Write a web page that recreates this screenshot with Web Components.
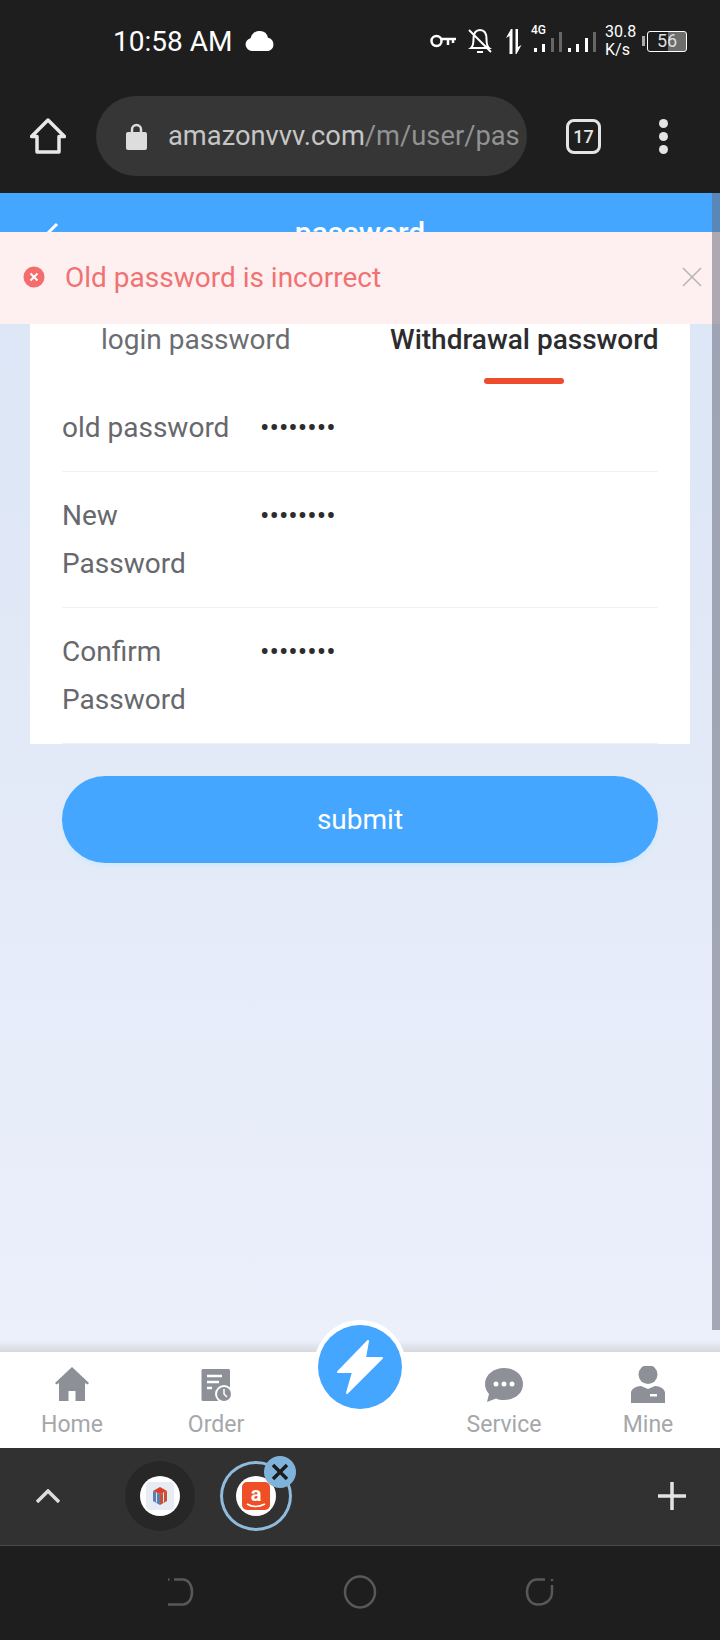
<!DOCTYPE html>
<html>
<head>
<meta charset="utf-8">
<title>password</title>
<style>
  html, body { margin: 0; padding: 0; background: #1e1e1e; }
  body { width: 720px; height: 1640px; display: flex; flex-direction: column; overflow: hidden; font-family: Roboto, sans-serif; }
</style>
</head>
<body>
<status-bar></status-bar>
<browser-bar url="amazonvvv.com" path="/m/user/pas" tabs="17"></browser-bar>
<app-page>
  <password-form slot="form"></password-form>
  <alert-box slot="alert">Old password is incorrect</alert-box>
</app-page>
<tab-nav></tab-nav>
<bubble-bar></bubble-bar>
<system-nav></system-nav>

<script>
class StatusBar extends HTMLElement {
  constructor() {
    super();
    this.attachShadow({ mode: 'open' });
    this.shadowRoot.innerHTML = `
      <style>
        :host { display: flex; align-items: center; justify-content: space-between; height: 82px; padding: 0 33px 0 113px; box-sizing: border-box; color: #fff; background: #1e1e1e; flex: none; }
        .left { display: flex; align-items: center; gap: 13px; font-size: 28px; }
        .right { display: flex; align-items: center; }
        .speed { font-size: 16px; line-height: 18px; width: 33px; margin-left: 8px; white-space: nowrap; }
        .sig { position: relative; width: 32px; height: 28px; margin-left: 8px; }
        .g4 { font-size: 12px; line-height: 12px; position: absolute; top: -3px; left: 0; font-weight: 500; }
        .bat { position: relative; width: 40px; height: 21px; border: 1.500px solid #fff; border-radius: 3px; margin-left: 9px; box-sizing: border-box; font-size: 18px; line-height: 18px; text-align: center; color: #ddd; background: linear-gradient(90deg, transparent 52%, #6d6d6d 52%); }
        .bat::before { content: ''; position: absolute; left: -6px; top: 4px; width: 3px; height: 10px; background: #aaa; }
      </style>
      <div class="left">
        <span>10:58 AM</span>
        <svg width="30" height="20" viewBox="0 0 30 20"><path fill="#fff" d="M7 20a6.500 6.500 0 0 1-1.500-12.800A9 9 0 0 1 15 0a8.500 8.500 0 0 1 8 6.800A6.800 6.800 0 0 1 23.500 20z"/></svg>
      </div>
      <div class="right">
        <svg width="26" height="14" viewBox="0 0 26 14" fill="none" stroke="#fff" stroke-width="2.500"><circle cx="6.500" cy="7" r="5"/><path d="M11 5h15M18 5v6M23 5v4"/></svg>
        <svg style="margin-left:12px" width="24" height="26" viewBox="0 0 24 26" fill="none" stroke="#fff" stroke-width="2"><path d="M3 20c2-1.500 2.500-4 2.500-9C5.500 5 8 2 12 2s6.500 3 6.500 9c0 5 .5 7.500 2.500 9zM9 24h6M1 2l22 22"/></svg>
        <svg style="margin-left:13px" width="18" height="25" viewBox="0 0 18 25" fill="#fff"><path d="M4.500 25V7L1 9 6 0h1.500v25zM10.500 0H13v18l3.500-2-5 9h-1z"/></svg>
        <span class="sig"><span class="g4">4G</span>
          <svg width="32" height="28" viewBox="0 0 32 28" style="position:absolute;left:0;top:0"><rect x="3" y="21" width="3" height="4" fill="#fff"/><rect x="11" y="17" width="3" height="8" fill="#fff"/><rect x="20" y="11" width="3" height="14" fill="#666"/><rect x="28" y="5" width="3" height="20" fill="#666"/></svg>
        </span>
        <svg style="margin-left:5px" width="29" height="28" viewBox="0 0 29 28"><rect x="0" y="21" width="3" height="4" fill="#fff"/><rect x="8" y="17" width="3" height="8" fill="#fff"/><rect x="17" y="11" width="3" height="14" fill="#fff"/><rect x="25" y="5" width="3" height="20" fill="#666"/></svg>
        <div class="speed">30.8<br>K/s</div>
        <div class="bat">56</div>
      </div>
    `;
  }
}
customElements.define('status-bar', StatusBar);

class BrowserBar extends HTMLElement {
  constructor() {
    super();
    this.attachShadow({ mode: 'open' });
    const url = this.getAttribute('url');
    const path = this.getAttribute('path');
    const tabs = this.getAttribute('tabs');
    this.shadowRoot.innerHTML = `
      <style>
        :host { display: flex; align-items: center; height: 111px; padding: 0 0 3px 30px; box-sizing: border-box; background: #1e1e1e; flex: none; }
        .pill { width: 431px; height: 80px; margin-left: 30px; border-radius: 40px; background: #363636; display: flex; align-items: center; padding: 0 14px 0 30px; box-sizing: border-box; flex: none; }
        .url { margin-left: 21px; font-size: 27.300px; color: #c6c6c6; white-space: nowrap; flex: 1; }
        .url span { color: #929292; }
        .tabs { margin-left: 39px; width: 35px; height: 35px; box-sizing: border-box; border: 3.500px solid #e4e4e4; border-radius: 8px; color: #e4e4e4; font-size: 18px; font-weight: 500; display: flex; align-items: center; justify-content: center; flex: none; }
        .dots { margin-left: 58px; display: flex; flex-direction: column; gap: 4px; }
        .dots i { width: 9px; height: 9px; border-radius: 50%; background: #e4e4e4; display: block; }
      </style>
      <svg width="36" height="36" viewBox="0 0 36 36" fill="none" stroke="#e8e8e8" stroke-width="3.500" stroke-linejoin="round" style="flex:none"><path d="M1.500 18.500 18 2l16.500 16.500H29V34H7V18.500z"/></svg>
      <div class="pill">
        <svg width="21" height="27" viewBox="0 0 21 27" style="flex:none"><path fill="none" stroke="#ddd" stroke-width="2.500" d="M6 10V6.500a4.500 4.500 0 0 1 9 0V10"/><rect y="9" width="21" height="18" rx="2" fill="#ddd"/></svg>
        <div class="url">${url}<span>${path}</span></div>
      </div>
      <div class="tabs">${tabs}</div>
      <div class="dots"><i></i><i></i><i></i></div>
    `;
  }
}
customElements.define('browser-bar', BrowserBar);

class AppPage extends HTMLElement {
  constructor() {
    super();
    this.attachShadow({ mode: 'open' });
    this.shadowRoot.innerHTML = `
      <style>
        :host { display: block; position: relative; height: 1159px; flex: none; overflow: hidden; background: linear-gradient(180deg, #dbe6f6 0%, #e2e9f7 45%, #ebf0fb 100%); }
        .head { height: 88px; padding-bottom: 10px; box-sizing: border-box; background: #44a6ff; color: #fff; display: flex; align-items: center; justify-content: center; font-size: 30px; font-weight: 500; position: relative; }
        .head svg { position: absolute; left: 40px; top: 28px; }
        .body { padding: 0 30px; }
        .scroll { position: absolute; right: 0; top: 0; width: 8px; height: 1137px; background: rgba(105, 110, 125, .55); }
        .shade { position: absolute; left: 0; right: 0; bottom: 0; height: 12px; background: linear-gradient(180deg, transparent, #d8d9de); }
        .alert { position: absolute; left: 0; right: 0; top: 39px; }
      </style>
      <div class="head">
        <svg width="20" height="34" viewBox="0 0 20 34" fill="none" stroke="#fff" stroke-width="3"><path d="M17 3 3 17l14 14"/></svg>
        password
      </div>
      <div class="body"><slot name="form"></slot></div>
      <div class="shade"></div>
      <div class="alert"><slot name="alert"></slot></div>
      <div class="scroll"></div>
    `;
  }
}
customElements.define('app-page', AppPage);

class AlertBox extends HTMLElement {
  constructor() {
    super();
    this.attachShadow({ mode: 'open' });
    this.shadowRoot.innerHTML = `
      <style>
        :host { display: flex; align-items: center; height: 92px; background: #fef0f0; color: #f07272; font-size: 28px; padding: 0 18px 2px 23px; box-sizing: border-box; }
        .msg { margin-left: 20px; flex: 1; }
      </style>
      <svg width="22" height="22" viewBox="0 0 22 22"><circle cx="11" cy="11" r="10.500" fill="#f56c6c"/><path d="M7.500 7.500l7 7M14.500 7.500l-7 7" stroke="#fff" stroke-width="2"/></svg>
      <div class="msg"><slot></slot></div>
      <svg width="20" height="20" viewBox="0 0 20 20" fill="none" stroke="#b4b4b8" stroke-width="1.500"><path d="M1 1l18 18M19 1 1 19"/></svg>
    `;
  }
}
customElements.define('alert-box', AlertBox);

class PasswordForm extends HTMLElement {
  constructor() {
    super();
    this.attachShadow({ mode: 'open' });
    this.shadowRoot.innerHTML = `
      <style>
        :host { display: block; }
        .card { background: #fff; padding: 0 32px; box-sizing: border-box; display: flex; flex-direction: column; }
        .tabs { display: flex; height: 103px; flex: none; }
        .tab { font-size: 28px; color: #6a6d72; position: relative; padding-top: 44px; line-height: 30px; white-space: nowrap; box-sizing: border-box; flex: none; }
        .tab.login { width: 328px; padding-left: 39px; }
        .tab.active { color: #2c2c2e; font-weight: 500; text-align: center; }
        .tab.active::after { content: ''; position: absolute; left: 50%; margin-left: -40px; bottom: 0; width: 80px; height: 6px; border-radius: 3px; background: #ee4d2d; }
        .submit { margin: 32px 32px 0; height: 87px; border-radius: 44px; background: #44a6ff; color: #fff; font-size: 28px; display: flex; align-items: center; justify-content: center; box-shadow: 0 3px 5px #cfe8ff; }
      </style>
      <div class="card">
        <div class="tabs">
          <div class="tab login">login password</div>
          <div class="tab active">Withdrawal password</div>
        </div>
        <form-row>old password</form-row>
        <form-row>New<br>Password</form-row>
        <form-row>Confirm<br>Password</form-row>
      </div>
      <div class="submit">submit</div>
    `;
  }
}
customElements.define('password-form', PasswordForm);

class FormRow extends HTMLElement {
  constructor() {
    super();
    this.attachShadow({ mode: 'open' });
    this.shadowRoot.innerHTML = `
      <style>
        :host { display: flex; flex: none; border-bottom: 1px solid #eff0f2; padding: 20px 0 19px; font-size: 28px; line-height: 48px; color: #66686c; }
        .label { width: 198px; flex: none; }
        .dots { color: #2c2c2e; line-height: 48px; }
      </style>
      <div class="label"><slot></slot></div>
      <div class="dots">••••••••</div>
    `;
  }
}
customElements.define('form-row', FormRow);

class TabNav extends HTMLElement {
  constructor() {
    super();
    this.attachShadow({ mode: 'open' });
    this.shadowRoot.innerHTML = `
      <style>
        :host { display: block; position: relative; height: 96px; background: #fff; flex: none; }
        .items { display: grid; grid-template-columns: repeat(5, 144px); height: 100%; }
        .item { display: flex; flex-direction: column; align-items: center; color: #a5a7ab; font-size: 23px; line-height: 26px; padding-top: 14px; box-sizing: border-box; }
        .item svg { height: 38px; margin-bottom: 8px; display: block; }
        .fab { position: absolute; left: 314px; top: -32px; width: 92px; height: 92px; border-radius: 50%; background: #fff; display: flex; justify-content: center; align-items: flex-start; padding-top: 5px; box-sizing: border-box; }
        .fab div { width: 84px; height: 84px; border-radius: 50%; background: #44a6ff; display: flex; align-items: center; justify-content: center; }
      </style>
      <div class="items">
        <div class="item">
          <svg width="34" height="38" viewBox="0 0 34 38" fill="#8d9096"><path d="M17 1 0 17l1.500 1.500L4 17v18h9.500V25h7v10H30V17l2.500 1.500L34 17z"/></svg>
          Home
        </div>
        <div class="item">
          <svg width="32" height="38" viewBox="0 0 32 38"><path fill="#8d9096" d="M3 3q-1.500 0-1.500 1.500v29q0 1.500 1.500 1.500h27V4.500Q30 3 28.500 3z"/><path stroke="#fff" stroke-width="2.500" d="M7 10h15M7 16h12M7 22h5"/><circle cx="24" cy="28" r="8" fill="#8d9096" stroke="#fff" stroke-width="2"/><path stroke="#fff" stroke-width="1.500" fill="none" d="M24 23v5l3 3"/></svg>
          Order
        </div>
        <div class="item"></div>
        <div class="item">
          <svg width="38" height="38" viewBox="0 0 38 38"><path fill="#8d9096" d="M19 2c10 0 19 6.500 19 16 0 10-9 16-19 16-3 0-6-.500-8-1.500L2 36l2-8C1.500 25 0 22 0 18 0 8.500 9 2 19 2z"/><circle cx="11" cy="18" r="2.500" fill="#fff"/><circle cx="19" cy="18" r="2.500" fill="#fff"/><circle cx="27" cy="18" r="2.500" fill="#fff"/></svg>
          Service
        </div>
        <div class="item">
          <svg width="34" height="38" viewBox="0 0 34 38"><ellipse cx="17" cy="8.500" rx="9.500" ry="9.500" fill="#8d9096"/><path fill="#8d9096" d="M0 37V27c0-4 5-7 10-7l7 3 7-3c5 0 10 3 10 7v10z"/><rect x="19" y="28" width="7" height="2.500" fill="#fff"/></svg>
          Mine
        </div>
      </div>
      <div class="fab"><div>
        <svg width="48" height="54" viewBox="0 0 48 54" fill="#fff" stroke="#fff" stroke-width="2" stroke-linejoin="round"><path d="M32 1 2 32h15l-6 21 35-35H29z"/></svg>
      </div></div>
    `;
  }
}
customElements.define('tab-nav', TabNav);

class BubbleBar extends HTMLElement {
  constructor() {
    super();
    this.attachShadow({ mode: 'open' });
    this.shadowRoot.innerHTML = `
      <style>
        :host { display: flex; align-items: center; height: 98px; background: #313131; border-bottom: 1px solid #4c4c4c; box-sizing: border-box; padding: 0 0 1px 36px; flex: none; position: relative; }
        .bub { height: 70px; border-radius: 50%; display: flex; align-items: center; justify-content: center; flex: none; position: relative; box-sizing: border-box; }
        .bub .w { width: 40px; height: 40px; border-radius: 50%; background: #fff; display: flex; align-items: center; justify-content: center; }
        .dark { width: 70px; margin-left: 65px; background: #272727; }
        .act { width: 72px; margin-left: 25px; border: 3px solid #8fbbdc; }
        .x { position: absolute; top: -8px; right: -7px; width: 32px; height: 32px; border-radius: 50%; background: #7fb3da; display: flex; align-items: center; justify-content: center; }
        .plus { position: absolute; left: 658px; top: 34px; }
      </style>
      <svg width="24" height="14" viewBox="0 0 24 14" fill="none" stroke="#ddd" stroke-width="3.500"><path d="M1 13 12 2l11 11"/></svg>
      <div class="bub dark"><div class="w">
        <svg width="28" height="28" viewBox="0 0 28 28"><rect width="28" height="28" rx="4" fill="#e7ebf3"/><path fill="#5c7fb0" d="M7 9l7 3v11l-7-4z"/><path fill="#c4533a" d="M21 9l-7 3v11l7-4z"/><path fill="#d9402a" d="M7 9l7-4 7 4-7 3z"/><path stroke="#dfe6ef" stroke-width="1" d="M10.500 10.500v10M17.500 10.500v10"/></svg>
      </div></div>
      <div class="bub act">
        <div class="w">
          <svg width="28" height="28" viewBox="0 0 28 28"><rect width="28" height="28" rx="5" fill="#ee4f27"/><text x="14" y="19" text-anchor="middle" font-family="Roboto, sans-serif" font-size="20" font-weight="700" fill="#fff">a</text><path fill="none" stroke="#fff" stroke-width="1.500" d="M5 22c5 3 12 3 18 0"/></svg>
        </div>
        <div class="x"><svg width="18" height="18" viewBox="0 0 18 18" fill="none" stroke="#1c1c1c" stroke-width="3.500"><path d="M2 2l14 14M16 2 2 16"/></svg></div>
      </div>
      <svg class="plus" width="28" height="28" viewBox="0 0 28 28" stroke="#e4e4e4" stroke-width="3.500"><path d="M0 14h28M14 0v28"/></svg>
    `;
  }
}
customElements.define('bubble-bar', BubbleBar);

class SystemNav extends HTMLElement {
  constructor() {
    super();
    this.attachShadow({ mode: 'open' });
    this.shadowRoot.innerHTML = `
      <style>
        :host { display: block; flex: 1; background: #1e1e1e; }
        .row { display: flex; align-items: center; padding: 29px 0 0 167px; }
      </style>
      <div class="row">
        <svg width="27" height="30" viewBox="0 0 27 30" fill="none" stroke="#585858" stroke-width="2.500"><path d="M1 2.500h1.500M7 2.500h9c5 0 9 5 9 12.500s-4 12.500-9 12.500H1"/></svg>
        <svg style="margin-left:149px" width="34" height="34" viewBox="0 0 34 34" fill="none" stroke="#585858" stroke-width="2.500"><ellipse cx="17" cy="17" rx="15" ry="15.500"/></svg>
        <svg style="margin-left:148px" width="30" height="30" viewBox="0 0 30 30" fill="none" stroke="#585858" stroke-width="2.500"><path d="M20 2.500h-8C6 2.500 2 8 2 15s4 12.500 11 12.500S27 23.500 27 15V8M27 2v2"/></svg>
      </div>
    `;
  }
}
customElements.define('system-nav', SystemNav);
</script>
</body>
</html>
